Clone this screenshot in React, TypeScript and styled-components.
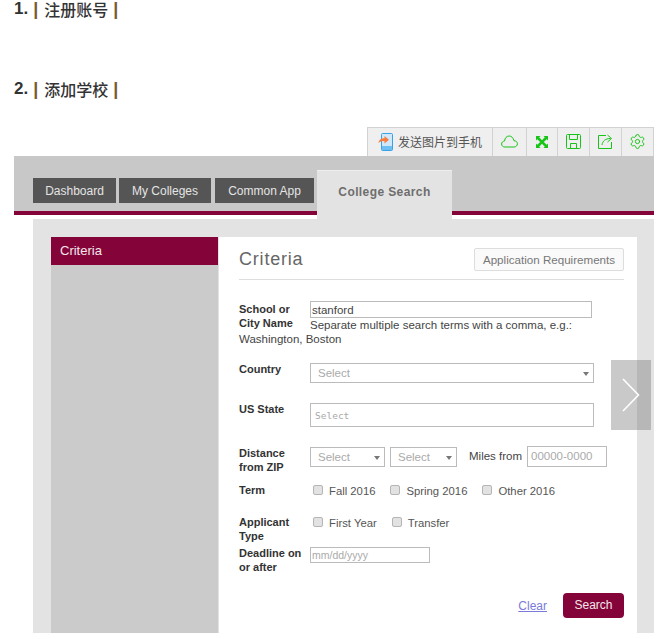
import React from 'react'
import styled, { createGlobalStyle } from 'styled-components'
import { Settings } from 'lucide-react'

const GREEN = '#19c419'
const MAROON = '#84043a'
const CJK = '"Noto Sans CJK SC", "Liberation Sans", sans-serif'

const GlobalStyle = createGlobalStyle`
  html, body {
    margin: 0;
    background: #fff;
    overflow: hidden;
  }
  body {
    font-family: "Liberation Sans", Arial, sans-serif;
    font-size: 11.5px;
  }
`

const Page = styled.div`
  width: 640px;
  height: 639px;
  padding-left: 14px;
`

const Step = styled.h3<{ $top: number }>`
  margin: ${(props) => props.$top}px 0 0;
  height: 18px;
  display: flex;
  align-items: center;
  font-family: ${CJK};
  font-size: 16px;
  font-weight: 500;
  line-height: 18px;
  color: #333;

  b {
    font-family: "Liberation Sans", sans-serif;
    font-size: 17px;
    font-weight: 700;
    margin-right: 5px;
  }

  i {
    font-family: "Liberation Sans", sans-serif;
    font-style: normal;
    font-weight: 700;
    font-size: 18px;
    color: #7a5a30;
  }

  span {
    margin: 0 5px 0 6px;
  }
`

const Toolbar = styled.div`
  display: flex;
  width: 287px;
  height: 29px;
  margin: 29px 0 0 353px;
  box-sizing: border-box;
  background: #efefef;
  border: solid #d2d2d2;
  border-width: 1px 1px 0 1px;
`

const ToolCell = styled.div<{ $w: number }>`
  display: flex;
  align-items: center;
  justify-content: center;
  gap: 5px;
  width: ${(props) => props.$w}px;
  padding-bottom: 1px;
  box-sizing: border-box;
  border-right: 1px solid #d2d2d2;
  font-family: ${CJK};
  font-size: 12px;
  color: #555;

  &:last-child {
    border-right: 0;
  }
`

const Shot = styled.div`
  position: relative;
  height: 477px;
  overflow: hidden;
`

const Header = styled.div`
  display: flex;
  align-items: flex-end;
  height: 55px;
  padding-left: 19px;
  background: #c8c8c8;
  border-bottom: 4px solid ${MAROON};
`

const NavButton = styled.div<{ $w: number; $gap: number }>`
  display: flex;
  align-items: center;
  justify-content: center;
  width: ${(props) => props.$w}px;
  height: 25px;
  margin: 0 ${(props) => props.$gap}px 8px 0;
  background: #555;
  font-size: 12px;
  color: #e4e4e4;
`

const ActiveTab = styled.div`
  position: relative;
  display: flex;
  align-items: center;
  justify-content: center;
  width: 135px;
  height: 49px;
  margin-bottom: -8px;
  padding-bottom: 7px;
  box-sizing: border-box;
  background: #e3e3e3;
  border-top: 1px solid #eee;
  font-size: 12px;
  font-weight: 700;
  letter-spacing: 0.4px;
  color: #6e6e6e;
`

const Panel = styled.div`
  display: flex;
  gap: 1px;
  height: 396px;
  margin: 4px 0 0 19px;
  padding: 18px 17px 0 18px;
  background: #e3e3e3;
`

const Sidebar = styled.div`
  width: 167px;
  background: #cbcbcb;
`

const SideHead = styled.div`
  height: 28px;
  padding-left: 9px;
  background: ${MAROON};
  font-size: 13px;
  line-height: 28px;
  color: #f3e6ec;
`

const Form = styled.div`
  flex: 1;
  padding: 0 13px 0 20px;
  background: #fff;
  color: #333;
`

const FormHead = styled.div`
  display: flex;
  align-items: flex-end;
  justify-content: space-between;
  height: 43px;
  box-sizing: border-box;
  padding: 11px 0 8px;
  border-bottom: 1px solid #ddd;
`

const Title = styled.h2`
  margin: 0;
  font-size: 18px;
  font-weight: 400;
  letter-spacing: 0.8px;
  line-height: 24px;
  color: #666;
`

const GhostButton = styled.div`
  display: flex;
  align-items: center;
  justify-content: center;
  width: 150px;
  height: 23px;
  box-sizing: border-box;
  background: #fafafa;
  border: 1px solid #ddd;
  border-radius: 2px;
  font-size: 11.6px;
  color: #777;
`

const Row = styled.div<{ $top: number }>`
  display: flex;
  margin-top: ${(props) => props.$top}px;
`

const SchoolRow = styled.div`
  margin-top: 21px;
  height: 45px;
  line-height: 14px;
  color: #444;
`

const Label = styled.div`
  flex: none;
  width: 71px;
  font-size: 11px;
  font-weight: 700;
  line-height: 13.5px;
  color: #333;
`

const FloatLabel = styled(Label)`
  float: left;
  padding-top: 2px;
`

const TextBox = styled.input<{ $w: number; $h: number }>`
  display: block;
  width: ${(props) => props.$w}px;
  height: ${(props) => props.$h}px;
  padding: 0 0 0 1px;
  box-sizing: border-box;
  background: #fff;
  border: 1px solid #bbb;
  border-radius: 0;
  outline: none;
  font-family: "Liberation Sans", sans-serif;
  font-size: 11.5px;
  color: #444;

  &::placeholder {
    color: #aaa;
    opacity: 1;
  }
`

const DateBox = styled(TextBox)`
  font-size: 10.5px;
`

const StateBox = styled(TextBox)`
  padding-left: 4px;
  font-family: "DejaVu Sans Mono", monospace;
  font-size: 9.5px;
`

const ZipBox = styled(TextBox)`
  margin: -1px 0 0 5px;
  padding: 0 0 1px 3px;
`

const Fields = styled.div`
  display: flex;
  gap: 5px;
`

const SelectBox = styled.div<{ $w: number }>`
  position: relative;
  width: ${(props) => props.$w}px;
  height: 20px;
  padding-left: 7px;
  box-sizing: border-box;
  border: 1px solid #bbb;
  font-size: 11.5px;
  line-height: 19px;
  color: #aaa;

  &::after {
    content: '';
    position: absolute;
    right: 4px;
    top: 8px;
    border: 3.5px solid transparent;
    border-top: 4px solid #777;
    border-bottom: 0;
  }
`

const MilesText = styled.span`
  margin-left: 12px;
  line-height: 18px;
  color: #444;
`

const Options = styled.div`
  display: flex;
  gap: 15px;
  padding-left: 3px;
`

const Option = styled.label`
  display: flex;
  align-items: flex-start;
  gap: 6px;
  font-size: 11.3px;
  line-height: 15px;
  color: #555;
`

const Check = styled.span`
  width: 10px;
  height: 10px;
  margin-top: 1px;
  box-sizing: border-box;
  background: #e2e2e2;
  border: 1px solid #b5b5b5;
  border-radius: 2px;
`

const Actions = styled.div`
  display: flex;
  align-items: center;
  justify-content: flex-end;
  gap: 16px;
  margin-top: 19px;
`

const ClearLink = styled.a`
  color: #7a7ad8;
  font-size: 12px;
  text-decoration: underline;
`

const SearchButton = styled.div`
  width: 61px;
  height: 25px;
  background: ${MAROON};
  border-radius: 4px;
  font-size: 12px;
  line-height: 24px;
  text-align: center;
  color: #f2e4ea;
`

const NextArrow = styled.div`
  position: absolute;
  left: 597px;
  top: 204px;
  display: flex;
  align-items: center;
  justify-content: center;
  width: 40px;
  height: 70px;
  background: rgba(100, 100, 100, 0.35);
`

const PhoneIcon = () => (
  <svg width="15" height="18" viewBox="0 0 15 18">
    <rect x="3.5" y="0.5" width="11" height="17" rx="1" fill="#cfe9fb" stroke="#3aa0e8" />
    <rect x="4" y="13" width="10" height="4" fill="#6fc0f2" />
    <path d="M0.5 10 C1 6.5 3.5 5.2 6.5 5.2 V3 L11 6.8 L6.5 10.5 V8 C4 8 2 8.6 0.5 10 Z" fill="#fb7b3c" />
  </svg>
)

const CloudIcon = () => (
  <svg width="17" height="13" viewBox="0 0 17 13" fill="none" stroke={GREEN} strokeWidth="1">
    <path d="M4 12 H13 C15 12 16.4 10.6 16.4 8.8 C16.4 7 15 5.6 13 5.8 C12.4 2.8 10.4 1 8.2 1 C5.6 1 3.8 3 3.6 6 C1.8 6.2 0.6 7.4 0.6 9 C0.6 10.8 2 12 4 12 Z" />
  </svg>
)

const ExpandIcon = () => (
  <svg width="12" height="12" viewBox="0 0 12 12" fill={GREEN}>
    <path d="M0 0 H4.5 L3.2 1.3 L6 4.2 L8.8 1.3 L7.5 0 H12 V4.5 L10.7 3.2 L7.8 6 L10.7 8.8 L12 7.5 V12 H7.5 L8.8 10.7 L6 7.8 L3.2 10.7 L4.5 12 H0 V7.5 L1.3 8.8 L4.2 6 L1.3 3.2 L0 4.5 Z" />
  </svg>
)

const SaveIcon = () => (
  <svg width="15" height="15" viewBox="0 0 15 15" fill="none" stroke={GREEN} strokeWidth="1">
    <rect x="0.5" y="0.5" width="14" height="14" rx="1" />
    <path d="M3.5 0.5 V5.5 H11.5 V0.5" />
    <path d="M4.5 14.5 V9.5 H10.5 V14.5" />
  </svg>
)

const ShareIcon = () => (
  <svg width="15" height="15" viewBox="0 0 15 15" fill="none" stroke={GREEN} strokeWidth="1">
    <path d="M8 1.5 H0.5 V14.5 H13.5 V8" />
    <path d="M4 11 C4.5 7 7.5 4.5 12.5 4.5" />
    <path d="M9.5 1 L13.5 4.5 L9.5 8" />
  </svg>
)

export default function App() {
  return (
    <Page>
      <GlobalStyle />
      <Step $top={0}>
        <b>1.</b>
        <i>|</i>
        <span>注册账号</span>
        <i>|</i>
      </Step>
      <Step $top={62}>
        <b>2.</b>
        <i>|</i>
        <span>添加学校</span>
        <i>|</i>
      </Step>

      <Toolbar>
        <ToolCell $w={125}>
          <PhoneIcon />
          发送图片到手机
        </ToolCell>
        <ToolCell $w={34}>
          <CloudIcon />
        </ToolCell>
        <ToolCell $w={31}>
          <ExpandIcon />
        </ToolCell>
        <ToolCell $w={32}>
          <SaveIcon />
        </ToolCell>
        <ToolCell $w={32}>
          <ShareIcon />
        </ToolCell>
        <ToolCell $w={31}>
          <Settings size={17} color={GREEN} strokeWidth={1.4} />
        </ToolCell>
      </Toolbar>

      <Shot>
        <Header>
          <NavButton $w={83} $gap={3}>Dashboard</NavButton>
          <NavButton $w={92} $gap={4}>My Colleges</NavButton>
          <NavButton $w={99} $gap={3}>Common App</NavButton>
          <ActiveTab>College Search</ActiveTab>
        </Header>

        <Panel>
          <Sidebar>
            <SideHead>Criteria</SideHead>
          </Sidebar>
          <Form>
            <FormHead>
              <Title>Criteria</Title>
              <GhostButton>Application Requirements</GhostButton>
            </FormHead>

            <SchoolRow>
              <FloatLabel>
                School or
                <br />
                City Name
              </FloatLabel>
              <TextBox $w={282} $h={17} defaultValue="stanford" />
              Separate multiple search terms with a comma, e.g.: Washington, Boston
            </SchoolRow>

            <Row $top={17}>
              <Label>Country</Label>
              <SelectBox $w={284}>Select</SelectBox>
            </Row>
            <Row $top={20}>
              <Label>US State</Label>
              <StateBox $w={284} $h={24} placeholder="Select" />
            </Row>
            <Row $top={20}>
              <Label>
                Distance
                <br />
                from ZIP
              </Label>
              <Fields>
                <SelectBox $w={75}>Select</SelectBox>
                <SelectBox $w={67}>Select</SelectBox>
              </Fields>
              <MilesText>Miles from</MilesText>
              <ZipBox $w={80} $h={21} placeholder="00000-0000" />
            </Row>
            <Row $top={10}>
              <Label>Term</Label>
              <Options>
                <Option><Check />Fall 2016</Option>
                <Option><Check />Spring 2016</Option>
                <Option><Check />Other 2016</Option>
              </Options>
            </Row>
            <Row $top={17}>
              <Label>
                Applicant
                <br />
                Type
              </Label>
              <Options>
                <Option><Check />First Year</Option>
                <Option><Check />Transfer</Option>
              </Options>
            </Row>
            <Row $top={4}>
              <Label>
                Deadline on
                <br />
                or after
              </Label>
              <DateBox $w={120} $h={16} placeholder="mm/dd/yyyy" />
            </Row>

            <Actions>
              <ClearLink>Clear</ClearLink>
              <SearchButton>Search</SearchButton>
            </Actions>
          </Form>
        </Panel>

        <NextArrow>
          <svg width="18" height="34" viewBox="0 0 18 34" fill="none" stroke="#fff" strokeWidth="1.6">
            <path d="M1 1 L16.5 17 L1 33" />
          </svg>
        </NextArrow>
      </Shot>
    </Page>
  )
}
